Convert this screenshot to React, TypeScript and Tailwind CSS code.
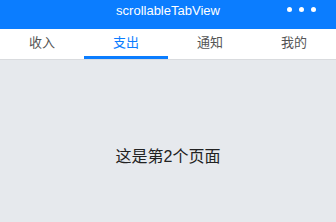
import React from "react";

export default function App() {
  const tabs = ["收入", "支出", "通知", "我的"];
  const active = 1;
  return (
    <div
      className="w-[336px] h-[222px] flex flex-col overflow-hidden bg-[#e6e9ed]"
      style={{ fontFamily: '"Liberation Sans", "Noto Sans CJK SC", sans-serif' }}
    >
      <div className="h-[29px] bg-[#0b7dff] relative flex justify-center pt-[3px]">
        <span className="text-white text-[13px] leading-[16px]">scrollableTabView</span>
        <div className="absolute right-[20px] top-[7px] flex gap-[7px]">
          <span className="w-[5px] h-[5px] rounded-full bg-white" />
          <span className="w-[5px] h-[5px] rounded-full bg-white" />
          <span className="w-[5px] h-[5px] rounded-full bg-white" />
        </div>
      </div>
      <div className="h-[31px] bg-white flex border-b border-[#d9dbde]">
        {tabs.map((t, i) => (
          <div key={t} className="flex-1 flex flex-col">
            <div
              className={
                "flex-1 flex items-center justify-center text-[13px] " +
                (i === active ? "text-[#0b7dff]" : "text-[#555555]")
              }
            >
              {t}
            </div>
            <div className={i === active ? "h-[3px] bg-[#0b7dff]" : "h-[3px]"} />
          </div>
        ))}
      </div>
      <div className="flex-1 flex justify-center pt-[87px]">
        <span className="text-[16px] leading-[20px] text-[#222222]">这是第2个页面</span>
      </div>
    </div>
  );
}
